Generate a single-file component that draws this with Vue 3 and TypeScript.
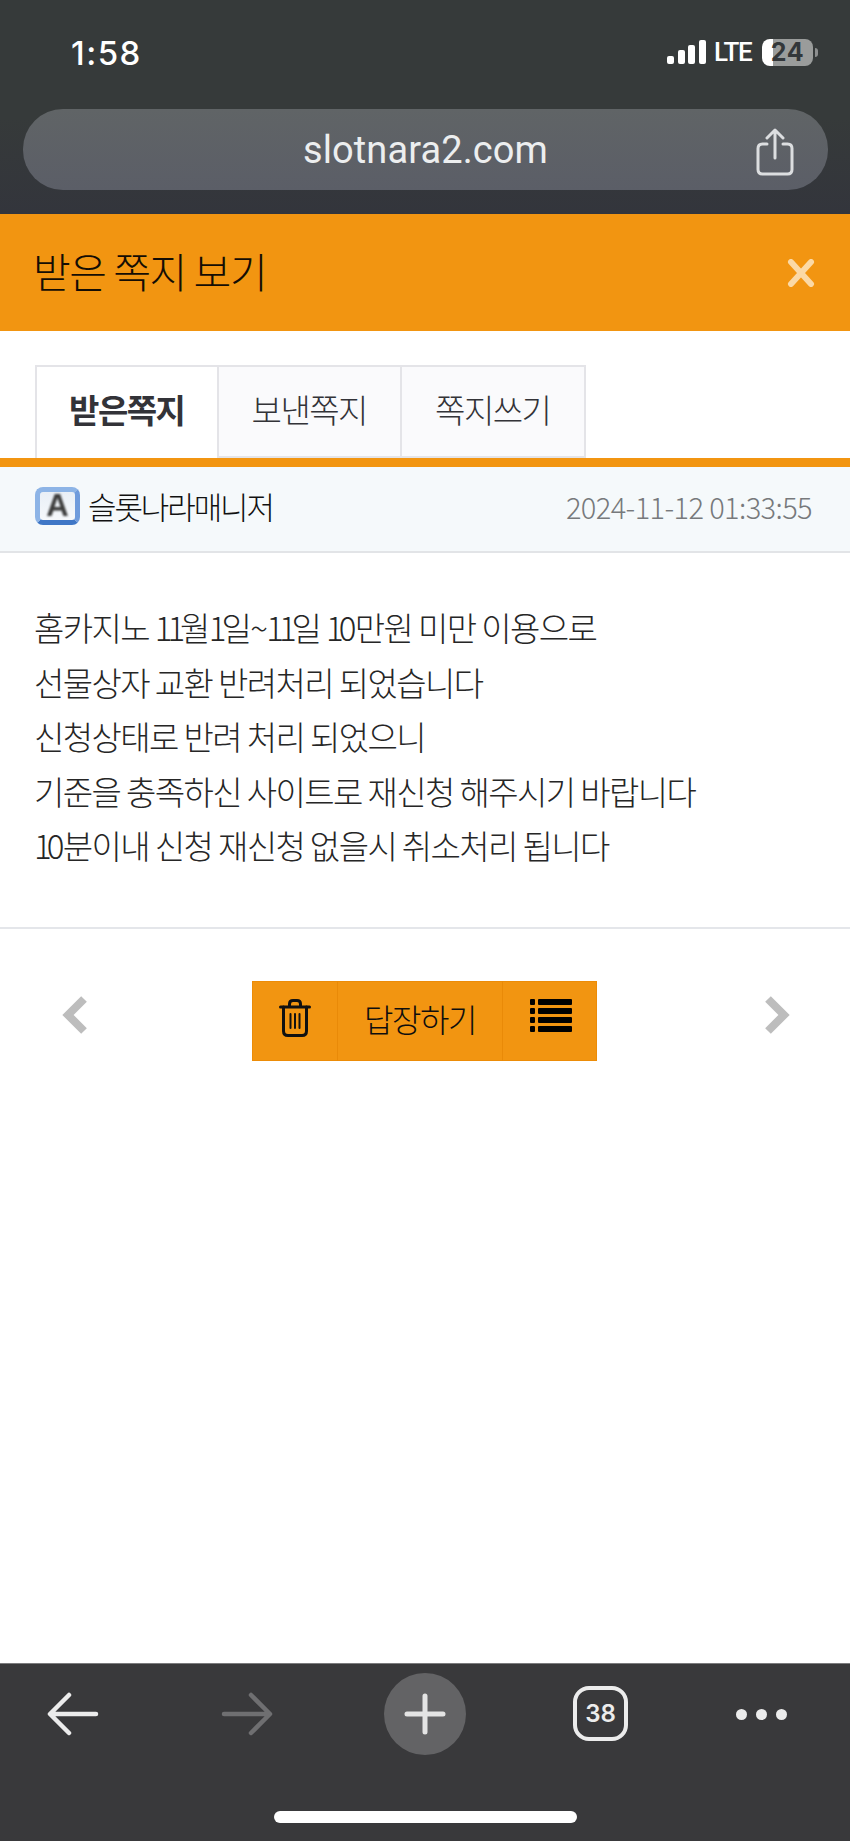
<script setup lang="ts">
const lines = [
  '홈카지노 11월1일~11일 10만원 미만 이용으로',
  '선물상자 교환 반려처리 되었습니다',
  '신청상태로 반려 처리 되었으니',
  '기준을 충족하신 사이트로 재신청 해주시기 바랍니다',
  '10분이내 신청 재신청 없을시 취소처리 됩니다',
]
// the digit 1 is much narrower in the original font, so tighten it
const parts = lines.map((l) => l.split(/(1+)/))
const tabs = ['받은쪽지', '보낸쪽지', '쪽지쓰기']
const bars = [8, 14, 19, 24]
</script>

<template>
  <div class="page">
    <header class="chrome">
      <div class="status">
        <span class="time">1:58</span>
        <div class="status-right">
          <div class="signal">
            <i v-for="h in bars" :key="h" :style="{ height: h + 'px' }" />
          </div>
          <span class="lte">LTE</span>
          <div class="battery"><span>24</span></div>
          <div class="nub" />
        </div>
      </div>
      <div class="urlbar">
        <span class="url">slotnara2.com</span>
        <svg class="share" width="40" height="48" viewBox="0 0 40 48" fill="none" stroke="#dcdee0" stroke-width="3" stroke-linecap="round" stroke-linejoin="round">
          <path d="M12 16H7.500Q3 16 3 20.500V41.500Q3 46 7.500 46H32.500Q37 46 37 41.500V20.500Q37 16 32.500 16H28" />
          <path d="M20 30V3M12 10L20 2L28 10" />
        </svg>
      </div>
    </header>

    <div class="titlebar">
      <h1>받은 쪽지 보기</h1>
      <svg width="28" height="28" viewBox="0 0 28 28" stroke="#fbd9a6" stroke-width="6" stroke-linecap="round">
        <path d="M4 3L24 25M24 3L4 25" />
      </svg>
    </div>

    <nav class="tabs">
      <a v-for="(t, i) in tabs" :key="t" class="tab" :class="{ on: i === 0 }">{{ t }}</a>
    </nav>

    <div class="meta">
      <div class="sender">
        <span class="badge"><span>A</span></span>
        <span class="name">슬롯나라매니저</span>
      </div>
      <span class="date">2024-11-12 01:33:55</span>
    </div>

    <section class="body">
      <p v-for="(p, n) in parts" :key="n">
        <span v-for="(s, i) in p" :key="i" :class="{ num: i % 2 === 1 }">{{ s }}</span>
      </p>
    </section>

    <div class="actions">
      <svg width="26" height="38" viewBox="0 0 26 38" fill="none" stroke="#bdbdbd" stroke-width="8">
        <path d="M22 3L6 19L22 35" />
      </svg>
      <div class="btns">
        <button class="btn trash">
          <svg width="32" height="38" viewBox="0 0 32 38" fill="none" stroke="#111" stroke-width="3" stroke-linecap="round" stroke-linejoin="round">
            <path d="M1.500 8H30.500M10.500 8V5Q10.500 1.500 14 1.500H18Q21.500 1.500 21.500 5V8" />
            <path d="M4.500 8V32Q4.500 36.500 9 36.500H23Q27.500 36.500 27.500 32V8" />
            <path d="M11.500 15V29M16 15V29M20.500 15V29" stroke-width="2" />
          </svg>
        </button>
        <button class="btn reply">답장하기</button>
        <button class="btn list">
          <svg width="42" height="34" viewBox="0 0 42 34" fill="#000">
            <rect x="0" y="1" width="5" height="6" rx="1" />
            <rect x="8" y="1" width="34" height="6" rx="1" />
            <rect x="0" y="10" width="5" height="6" rx="1" />
            <rect x="8" y="10" width="34" height="6" rx="1" />
            <rect x="0" y="19" width="5" height="6" rx="1" />
            <rect x="8" y="19" width="34" height="6" rx="1" />
            <rect x="0" y="28" width="5" height="6" rx="1" />
            <rect x="8" y="28" width="34" height="6" rx="1" />
          </svg>
        </button>
      </div>
      <svg width="26" height="38" viewBox="0 0 26 38" fill="none" stroke="#bdbdbd" stroke-width="8">
        <path d="M4 3L20 19L4 35" />
      </svg>
    </div>

    <div class="spacer" />

    <footer class="toolbar">
      <div class="tools">
        <svg width="52" height="44" viewBox="0 0 52 44" fill="none" stroke="#ececec" stroke-width="4.500" stroke-linecap="round" stroke-linejoin="round">
          <path d="M49 22H4M22 3L3 22L22 41" />
        </svg>
        <svg width="52" height="44" viewBox="0 0 52 44" fill="none" stroke="#6f6f71" stroke-width="4.500" stroke-linecap="round" stroke-linejoin="round">
          <path d="M3 22H48M30 3L49 22L30 41" />
        </svg>
        <div class="plus">
          <svg width="42" height="42" viewBox="0 0 42 42" stroke="#e4e4e4" stroke-width="5" stroke-linecap="round">
            <path d="M21 3V39M3 21H39" />
          </svg>
        </div>
        <div class="count">38</div>
        <div class="dots"><i /><i /><i /></div>
      </div>
      <div class="home" />
    </footer>
  </div>
</template>

<style>
html, body { margin: 0; background: #fff; }
</style>

<style scoped>
.page {
  width: 850px;
  height: 1841px;
  display: flex;
  flex-direction: column;
  font-family: "Noto Sans CJK KR", "Noto Sans", sans-serif;
  background: #fff;
  overflow: hidden;
}
.chrome {
  height: 214px;
  box-sizing: border-box;
  background: linear-gradient(#363a3a, #363a3a 55%, #33353c);
  padding: 36px 22px 0 23px;
}
.status {
  height: 73px;
  display: flex;
  justify-content: space-between;
  align-items: flex-start;
  padding-left: 48px;
  color: #fff;
}
.time {
  font: 500 33px/34px Inter, sans-serif;
  letter-spacing: 1.500px;
}
.status-right {
  display: flex;
  align-items: center;
  height: 30px;
  margin-top: 1px;
  padding-right: 10px;
}
.signal { display: flex; align-items: flex-end; gap: 3.700px; margin-right: 8px; height: 24px; }
.signal i { display: block; width: 7px; background: #fff; border-radius: 2px; }
.lte { font: 500 26px/30px Roboto, sans-serif; width: 48px; letter-spacing: -1.300px; }
.battery {
  width: 51px;
  height: 27px;
  border-radius: 8px;
  background: linear-gradient(90deg, #fff 22%, #9a9c9b 22%);
  text-align: center;
}
.battery span { font: 700 25px/27px Inter, sans-serif; color: #33373a; letter-spacing: .5px; }
.nub { width: 3px; height: 9px; background: #8d8f8f; border-radius: 0 3px 3px 0; margin-left: 2px; }
.urlbar {
  height: 81px;
  border-radius: 40px;
  background: linear-gradient(#606466, #5b5e67);
  position: relative;
  display: flex;
  align-items: center;
  justify-content: center;
}
.url {
  font: 400 38px/44px Roboto, sans-serif;
  color: #eceeef;
  letter-spacing: .1px;
}
.share { position: absolute; right: 33px; top: 19px; }
.titlebar {
  height: 117px;
  box-sizing: border-box;
  background: #f29511;
  display: flex;
  align-items: center;
  justify-content: space-between;
  padding: 0 35px 0 33px;
}
h1 {
  margin: 0 0 6px;
  font-size: 41px;
  font-weight: 300;
  line-height: 56px;
  color: #140d04;
  letter-spacing: -1.400px;
}
.tabs {
  margin-top: 34px;
  padding-left: 35px;
  display: flex;
  height: 93px;
  border-bottom: 9px solid #f29511;
}
.tab {
  width: 183.500px;
  box-sizing: border-box;
  background: #fafafc;
  border: 2px solid #e4e4e8;
  border-left-width: 0;
  font-size: 33px;
  line-height: 84px;
  text-align: center;
  color: #333338;
  letter-spacing: -1.500px;
  height: 93px;
  font-weight: 300;
}
.tab.on {
  background: #fff;
  border-left-width: 2px;
  border-bottom: 0;
  font-weight: 700;
}
.meta {
  height: 86px;
  box-sizing: border-box;
  background: #f5f9fb;
  border-bottom: 2px solid #e2e4e7;
  padding: 0 38px 6px 35px;
  display: flex;
  align-items: center;
  justify-content: space-between;
}
.sender { display: flex; align-items: center; gap: 8px; }
.badge {
  width: 45px;
  height: 38px;
  box-sizing: border-box;
  border-radius: 8px;
  border: 5px solid #8db4e6;
  border-bottom-color: #3f77c6;
  border-right-color: #6f9bdc;
  background: linear-gradient(#e9eff6, #f6f8fb);
  display: flex;
  align-items: center;
  justify-content: center;
  filter: blur(.6px);
}
.badge span {
  font: 700 31px/28px "Liberation Sans", sans-serif;
  color: #3a3a3a;
  filter: blur(1px);
}
.name { font-size: 31px; line-height: 44px; color: #111; letter-spacing: -2.100px; font-weight: 300; }
.date {
  font-size: 29px;
  line-height: 40px;
  color: #77797c;
  letter-spacing: -.6px;
  font-weight: 300;
}
.body {
  padding: 47px 35px 54px 34px;
  border-bottom: 2px solid #e4e6ea;
}
.body p {
  margin: 0;
  font-size: 33px;
  font-weight: 300;
  line-height: 54.500px;
  color: #262626;
  letter-spacing: -1.600px;
}
.num { letter-spacing: -5px; }
.actions {
  margin-top: 52px;
  padding: 0 60px 12px 62px;
  box-sizing: border-box;
  display: flex;
  align-items: center;
  justify-content: space-between;
  position: relative;
  height: 80px;
}
.btns {
  position: absolute;
  left: 252px;
  top: 0;
  display: flex;
  height: 80px;
  width: 345px;
  background: #f29511;
  box-shadow: inset 0 0 0 1px #ec8c08;
}
.btn {
  padding: 0;
  border: 0;
  background: none;
  font-family: inherit;
  display: flex;
  align-items: center;
  justify-content: center;
  color: #0e0e0e;
}
.trash { width: 86px; border-right: 1px solid #e98a08; padding-bottom: 6px; }
.reply { width: 165px; border-right: 1px solid #e98a08; font-size: 32px; letter-spacing: -1.400px; padding-bottom: 6px; font-weight: 300; }
.list { flex: 1; padding-bottom: 12px; padding-left: 2px; }
.spacer { flex: 1; }
.toolbar {
  height: 178px;
  box-sizing: border-box;
  background: #39393b;
  border-top: 1px solid #7b7b7d;
  flex-shrink: 0;
  position: relative;
}
.tools {
  position: relative;
  height: 148px;
  padding: 7px 0 0 47px;
  display: flex;
  align-items: flex-start;
}
.tools > svg { margin-top: 21px; }
.tools > svg + svg { margin-left: 122px; }
.plus {
  width: 82px;
  height: 82px;
  margin-left: 111px;
  margin-top: 2px;
  border-radius: 50%;
  background: #636365;
  display: flex;
  align-items: center;
  justify-content: center;
}
.count {
  width: 55px;
  height: 55px;
  margin-left: 107px;
  margin-top: 15px;
  box-sizing: border-box;
  border: 4px solid #ececec;
  border-radius: 16px;
  color: #ececec;
  font: 600 24px/47px Inter, sans-serif;
  text-align: center;
}
.dots { display: flex; gap: 9px; margin-left: 108px; margin-top: 38px; }
.dots i { display: block; width: 11px; height: 11px; border-radius: 50%; background: #ececec; }
.home {
  position: absolute;
  left: 274px;
  top: 147px;
  width: 303px;
  height: 12px;
  border-radius: 6px;
  background: #fff;
}
</style>
